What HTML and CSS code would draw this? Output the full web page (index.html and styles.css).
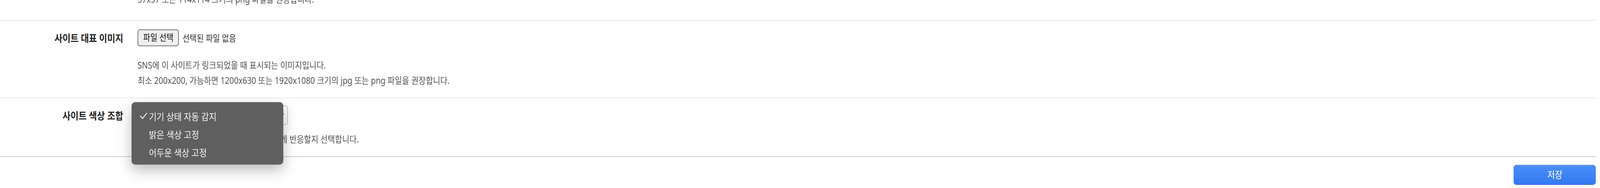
FILE: index.html
```html
<!DOCTYPE html>
<html lang="ko">
<head>
<meta charset="utf-8">
<title>사이트 설정</title>
<link rel="stylesheet" href="styles.css">
</head>
<body>
<form class="form">
  <div class="row row-partial">
    <div class="label-cell"></div>
    <div class="field-cell">
      <p class="desc txt">57x57 또는 114x114 크기의 png 파일을 권장합니다.</p>
    </div>
  </div>

  <div class="row row-image">
    <div class="label-cell"><span class="label txt">사이트 대표 이미지</span></div>
    <div class="field-cell">
      <div class="field-line">
        <button type="button" class="file-btn"><span class="txt">파일 선택</span></button>
        <span class="file-name txt">선택된 파일 없음</span>
      </div>
      <div class="desc-block desc-image">
        <p class="desc txt">SNS에 이 사이트가 링크되었을 때 표시되는 이미지입니다.</p>
        <p class="desc txt">최소 200x200, 가능하면 1200x630 또는 1920x1080 크기의 jpg 또는 png 파일을 권장합니다.</p>
      </div>
    </div>
  </div>

  <div class="row row-color">
    <div class="label-cell"><span class="label txt">사이트 색상 조합</span></div>
    <div class="field-cell">
      <div class="field-line">
        <div class="select-wrap">
          <div class="select">
            <span class="select-text txt">기기 상태 자동 감지</span>
            <svg class="chevron" viewBox="0 0 16 10" preserveAspectRatio="none"><polyline points="2,2 8,8 14,2" fill="none" stroke="#555" stroke-width="2" stroke-linecap="round" stroke-linejoin="round"/></svg>
          </div>
          <ul class="menu">
            <li class="menu-item checked">
              <svg class="check" viewBox="0 0 22 18" preserveAspectRatio="none"><polyline points="2,9.5 8,15.5 20,2" fill="none" stroke="#f2f2f2" stroke-width="2.6" stroke-linecap="round" stroke-linejoin="round"/></svg>
              <span class="txt">기기 상태 자동 감지</span>
            </li>
            <li class="menu-item"><span class="txt">밝은 색상 고정</span></li>
            <li class="menu-item"><span class="txt">어두운 색상 고정</span></li>
          </ul>
        </div>
      </div>
      <div class="desc-block desc-color">
        <p class="desc txt">기기의 다크 모드 설정에 사이트 색상이 어떻게 반응할지 선택합니다.</p>
      </div>
    </div>
  </div>

  <div class="footer">
    <button type="button" class="save-btn"><span class="txt">저장</span></button>
  </div>
</form>
</body>
</html>
```

FILE: styles.css
```css
:root {
  /* horizontal unit: one pixel of the 4674px-wide reference frame */
  --u: calc(100vw / 4674);
  /* vertical unit: one pixel of the 480px-high reference frame */
  --v: calc(100vh / 480);
  /* glyph height correction when the two units differ */
  --k: calc((100vh / 480) / (100vw / 4674));
}

html, body {
  margin: 0;
  padding: 0;
  background: #ffffff;
}

body {
  width: 100vw;
  height: 100vh;
  overflow: hidden;
  font-family: "Noto Sans", "Noto Sans CJK KR", sans-serif;
  color: #333333;
}

.txt {
  display: inline-block;
  transform: scaleY(var(--k));
}

p.txt {
  display: block;
}

.form {
  padding-right: calc(12 * var(--u));
}

.row {
  display: grid;
  grid-template-columns: calc(360 * var(--u)) 1fr;
  column-gap: calc(42 * var(--u));
  padding: calc(18 * var(--v)) 0 calc(24 * var(--v));
  border-bottom: 2px dotted #d6d6d6;
}

.row-partial {
  margin-top: calc(-21 * var(--v));
  padding: 0 0 calc(22 * var(--v));
}

.row-color {
  border-bottom: 2px solid #cccccc;
}

.label-cell {
  display: flex;
  justify-content: flex-end;
  align-items: center;
  height: calc(50 * var(--v));
}

.label {
  font-size: calc(25.5 * var(--u));
  font-weight: 700;
  color: #222222;
  white-space: nowrap;
}

.field-cell {
  min-width: 0;
}

.field-line {
  display: flex;
  align-items: center;
  height: calc(50 * var(--v));
  gap: calc(10 * var(--u));
}

.desc {
  margin: 0;
  font-size: calc(23 * var(--u));
  line-height: calc(39 * var(--v));
  color: #555555;
  white-space: nowrap;
}

.desc-image {
  margin-top: calc(26 * var(--v));
}

.desc-color {
  margin-top: calc(17 * var(--v));
}

.file-btn {
  box-sizing: border-box;
  height: calc(43 * var(--v));
  padding: 0 calc(14 * var(--u));
  border: 2px solid #777777;
  border-radius: calc(8 * var(--u));
  background: #efefef;
  font-family: inherit;
  font-size: calc(22.5 * var(--u));
  color: #111111;
  line-height: 1;
}

.file-name {
  font-size: calc(22.5 * var(--u));
  color: #333333;
}

.select-wrap {
  position: relative;
}

.select {
  box-sizing: border-box;
  width: calc(439 * var(--u));
  height: calc(50 * var(--v));
  border: 2px solid #cccccc;
  border-radius: calc(8 * var(--u));
  background: #ffffff;
  display: flex;
  align-items: center;
  justify-content: space-between;
  padding: 0 calc(8 * var(--u)) 0 calc(16 * var(--u));
  font-size: calc(23 * var(--u));
  color: #333333;
}

.chevron {
  display: block;
  width: calc(16 * var(--u));
  height: calc(10 * var(--v));
}

.menu {
  position: absolute;
  left: calc(-17 * var(--u));
  top: calc(-8 * var(--v));
  box-sizing: border-box;
  width: calc(442 * var(--u));
  height: calc(159 * var(--v));
  margin: 0;
  padding: calc(11 * var(--v)) 0 calc(8 * var(--v));
  list-style: none;
  background: #5f5f5f;
  border: 1px solid #2c2c2c;
  border-radius: calc(10 * var(--u));
  box-shadow: inset 0 0 0 1px rgba(255, 255, 255, 0.16), 0 calc(14 * var(--v)) calc(40 * var(--u)) rgba(0, 0, 0, 0.28);
  z-index: 10;
}

.menu-item {
  position: relative;
  height: calc(46 * var(--v));
  display: flex;
  align-items: center;
  padding-left: calc(49 * var(--u));
  font-size: calc(24.25 * var(--u));
  color: #f2f2f2;
  white-space: nowrap;
}

.check {
  position: absolute;
  left: calc(22 * var(--u));
  top: calc(14 * var(--v));
  width: calc(22 * var(--u));
  height: calc(18 * var(--v));
}

.footer {
  display: flex;
  justify-content: flex-end;
  padding-top: calc(20 * var(--v));
}

.save-btn {
  box-sizing: border-box;
  width: calc(240 * var(--u));
  height: calc(51 * var(--v));
  border: 1px solid #2a62cc;
  border-radius: calc(8 * var(--u));
  background: linear-gradient(#4a8ef8, #3478f0);
  box-shadow: inset 0 1px 0 rgba(255, 255, 255, 0.25);
  font-family: inherit;
  font-size: calc(24 * var(--u));
  color: #ffffff;
  line-height: 1;
}
```
